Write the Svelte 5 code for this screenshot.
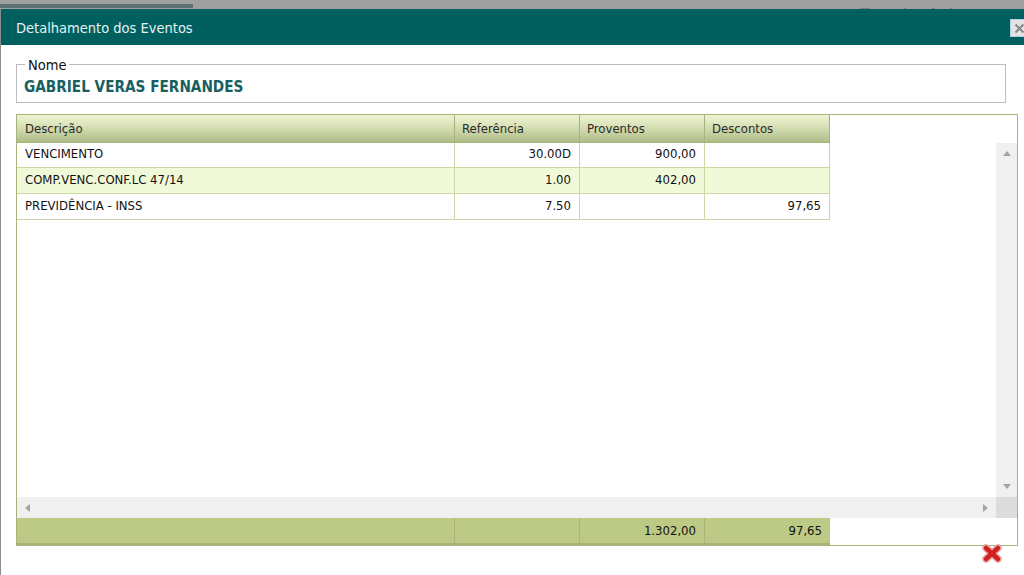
<script>
  const rows = [
    { d: 'VENCIMENTO', r: '30.00D', p: '900,00', s: '' },
    { d: 'COMP.VENC.CONF.LC 47/14', r: '1.00', p: '402,00', s: '' },
    { d: 'PREVIDÊNCIA - INSS', r: '7.50', p: '', s: '97,65' }
  ];
  const marks = [
    { x: 860, w: 10 }, { x: 904, w: 2 }, { x: 932, w: 3 }, { x: 950, w: 2 }
  ];
</script>

<div class="page">
  <div class="backdrop">
    <div class="progress"></div>
    {#each marks as m}
      <i class="mark" style="left:{m.x}px;width:{m.w}px"></i>
    {/each}
  </div>
  <div class="dialog">
    <header class="title">
      <span>Detalhamento dos Eventos</span>
      <button class="close" aria-label="Fechar">
        <svg width="11" height="11" viewBox="0 0 11 11"><path d="M1.5 1.5l8 8M9.5 1.5l-8 8" stroke="#8a8a8a" stroke-width="2.2" fill="none"/></svg>
      </button>
    </header>
    <div class="body">
      <fieldset class="nome">
        <legend>Nome</legend>
        <div class="value">GABRIEL VERAS FERNANDES</div>
      </fieldset>
      <div class="grid-box">
        <div class="row head">
          <div class="c">Descrição</div><div class="c">Referência</div><div class="c">Proventos</div><div class="c">Descontos</div>
        </div>
        <div class="middle">
          <div class="scroll-area">
            <div class="rows">
              {#each rows as row, i}
                <div class="row item" class:alt={i === 1} class:h26={i > 0}>
                  <div class="c">{row.d}</div>
                  <div class="c num">{row.r}</div>
                  <div class="c num">{row.p}</div>
                  <div class="c num">{row.s}</div>
                </div>
              {/each}
            </div>
            <div class="vbar">
              <span class="arr up"></span>
              <span class="arr down"></span>
            </div>
          </div>
          <div class="hbar-line">
            <div class="hbar"><span class="arr left"></span><span class="arr right"></span></div>
            <div class="corner"></div>
          </div>
        </div>
        <div class="row foot">
          <div class="c"></div><div class="c"></div><div class="c num">1.302,00</div><div class="c num">97,65</div>
        </div>
      </div>
      <div class="actions">
        <svg class="xicon" width="22" height="19" viewBox="0 0 22 19">
          <path d="M5 4l12 11M17 4L5 15" fill="none" stroke="#e6a6a6" stroke-width="7.500" stroke-linecap="round"/>
          <path d="M5 4l12 11M17 4L5 15" fill="none" stroke="#d2201f" stroke-width="4.500" stroke-linecap="round"/>
        </svg>
      </div>
    </div>
  </div>
</div>

<style>
  :global(body) { margin: 0; background: #fff; overflow: hidden; }
  .page {
    width: 1024px; height: 575px; overflow: hidden; background: #fff;
    font-family: "DejaVu Sans Condensed", "DejaVu Sans", sans-serif;
    font-size: 13px; color: #111;
  }
  .backdrop { height: 9px; background: #a0a0a0; position: relative; }
  .progress { width: 193px; height: 4px; position: absolute; left: 0; top: 4px; background: #5f7272; }
  .mark { position: absolute; top: 8px; height: 1px; background: #7c7c7c; }
  .dialog { margin-left: 1px; box-shadow: -1px 0 0 #8c8c8c; background: #fff; height: 566px; }
  .title {
    height: 36px; box-sizing: border-box; padding: 2px 0 0 15px; background: #006060; color: #e6f2f0;
    display: flex; align-items: center; justify-content: space-between; font-size: 14.500px;
  }
  .close {
    width: 18px; height: 18px; margin-right: -4px; padding: 0; border: 1px solid #bcd; background: #e4e4e4;
    display: flex; align-items: center; justify-content: center;
  }
  .body { padding: 10px 5px 0 15px; }
  fieldset.nome {
    margin: 0 13px 0 0; padding: 0 7px; height: 48px; box-sizing: border-box; border: 1px solid #bdbdbd;
    min-inline-size: 0;
  }
  fieldset.nome legend {
    padding: 2px 3px 0; margin-left: 1px; font-size: 14.500px; line-height: 16px; color: #111;
  }
  .value { font-weight: bold; font-size: 15.200px; color: #17605f; line-height: 18px; margin-top: 5px; }
  .grid-box {
    margin-top: 11px; width: 1002px; height: 432px; box-sizing: border-box;
    border: 1px solid #a9b27a; display: flex; flex-direction: column;
  }
  .row { display: grid; grid-template-columns: 438px 125px 125px 125px; width: 813px; box-sizing: border-box; }
  .c { box-sizing: border-box; padding: 0 8px; border-right: 1px solid #ced6a6; display: flex; align-items: center; overflow: hidden; white-space: nowrap; }
  .num { justify-content: flex-end; }
  .head {
    height: 28px; background: linear-gradient(#eef3d2, #dfe7bf 30%, #b0bd88);
    border-bottom: 1px solid #a9b27a; color: #2a2a2a;
  }
  .head .c { border-right-color: #a9b27a; padding-bottom: 1px; }
  .head .c + .c { padding-left: 7px; }
  .middle { flex: 1; display: flex; flex-direction: column; min-height: 0; }
  .scroll-area { flex: 1; display: flex; min-height: 0; }
  .rows { flex: 1; }
  .item { height: 25px; border-bottom: 1px solid #ced6a6; background: #fff; }
  .item .c { padding-bottom: 3px; }
  .item.h26 { height: 26px; }
  .item.alt { background: #f0fad8; }
  .vbar {
    width: 21px; background: #f0f0f0; display: flex; flex-direction: column; align-items: center;
    justify-content: space-between; padding: 8px 0; box-sizing: border-box;
  }
  .hbar-line { height: 21px; display: flex; }
  .hbar { flex: 1; background: #f0f0f0; display: flex; align-items: center; justify-content: space-between; padding: 0 8px 0 8px; }
  .corner { width: 21px; background: #dcdcdc; }
  .arr { width: 0; height: 0; border-style: solid; border-color: transparent; display: block; }
  .up { border-width: 0 4px 5px; border-bottom-color: #a3a3a3; }
  .down { border-width: 5px 4px 0; border-top-color: #a3a3a3; }
  .left { border-width: 4px 5px 4px 0; border-right-color: #a3a3a3; }
  .right { border-width: 4px 0 4px 5px; border-left-color: #a3a3a3; }
  .foot { height: 27px; background: #bdca85; border-bottom: 2px solid #a9b27a; }
  .foot .c { border-right-color: #a9b27a; padding-bottom: 1px; }
  .foot .c:last-child { border-right: 0; }
  .actions { display: flex; justify-content: flex-end; padding-right: 16px; margin-top: -2px; }
</style>
